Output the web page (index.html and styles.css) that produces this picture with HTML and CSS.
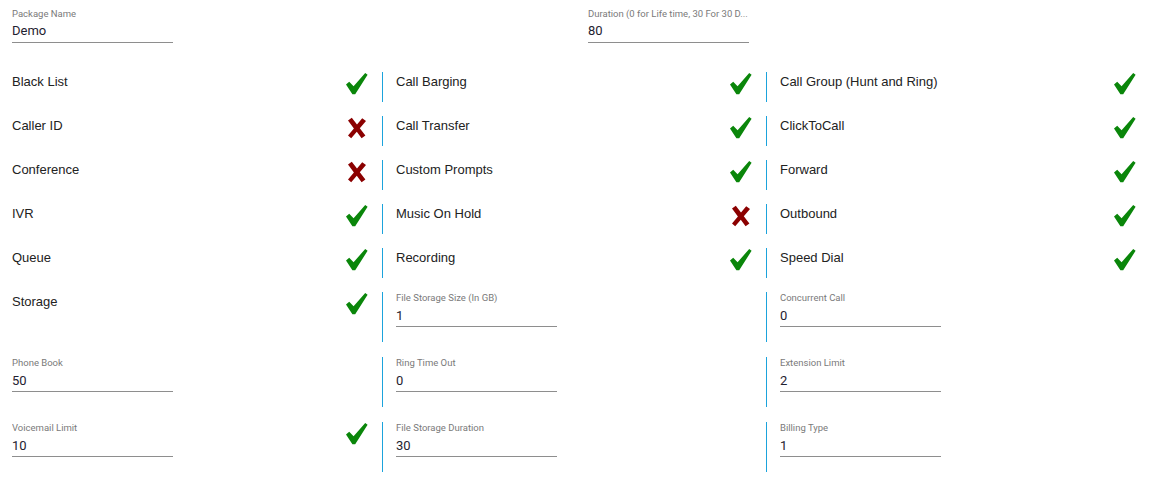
FILE: index.html
```html
<!DOCTYPE html>
<html>
<head>
<meta charset="utf-8">
<link rel="stylesheet" href="styles.css">
</head>
<body>
<div class="page">
  <div class="top-row">
    <div class="half">
      <div class="field"><div class="label">Package Name</div><div class="value">Demo</div></div>
    </div>
    <div class="half">
      <div class="field"><div class="label">Duration (0 for Life time, 30 For 30 D...</div><div class="value">80</div></div>
    </div>
  </div>

  <div class="grid">
    <!-- row 1 -->
    <div class="cell toggle"><span class="name">Black List</span><svg class="ok" viewBox="0 0 22 22"><path d="M0 11.5 L3.2 8.8 L7.6 13.2 L19.2 0 L21.6 1.8 L9.2 21.2 L6.4 21.2 Z"/></svg></div>
    <div class="cell toggle div"><span class="name">Call Barging</span><svg class="ok" viewBox="0 0 22 22"><path d="M0 11.5 L3.2 8.8 L7.6 13.2 L19.2 0 L21.6 1.8 L9.2 21.2 L6.4 21.2 Z"/></svg></div>
    <div class="cell toggle div"><span class="name">Call Group (Hunt and Ring)</span><svg class="ok" viewBox="0 0 22 22"><path d="M0 11.5 L3.2 8.8 L7.6 13.2 L19.2 0 L21.6 1.8 L9.2 21.2 L6.4 21.2 Z"/></svg></div>
    <!-- row 2 -->
    <div class="cell toggle"><span class="name">Caller ID</span><svg class="no" viewBox="0 0 20 22"><path d="M1 3.5 L4.8 0.8 L10 7.6 L15.2 1.2 L19 4 L12.8 11.2 L18.4 18.4 L14.6 21.2 L9.8 14.8 L4.2 21.2 L1 18.4 L6.9 11.4 Z"/></svg></div>
    <div class="cell toggle div"><span class="name">Call Transfer</span><svg class="ok" viewBox="0 0 22 22"><path d="M0 11.5 L3.2 8.8 L7.6 13.2 L19.2 0 L21.6 1.8 L9.2 21.2 L6.4 21.2 Z"/></svg></div>
    <div class="cell toggle div"><span class="name">ClickToCall</span><svg class="ok" viewBox="0 0 22 22"><path d="M0 11.5 L3.2 8.8 L7.6 13.2 L19.2 0 L21.6 1.8 L9.2 21.2 L6.4 21.2 Z"/></svg></div>
    <!-- row 3 -->
    <div class="cell toggle"><span class="name">Conference</span><svg class="no" viewBox="0 0 20 22"><path d="M1 3.5 L4.8 0.8 L10 7.6 L15.2 1.2 L19 4 L12.8 11.2 L18.4 18.4 L14.6 21.2 L9.8 14.8 L4.2 21.2 L1 18.4 L6.9 11.4 Z"/></svg></div>
    <div class="cell toggle div"><span class="name">Custom Prompts</span><svg class="ok" viewBox="0 0 22 22"><path d="M0 11.5 L3.2 8.8 L7.6 13.2 L19.2 0 L21.6 1.8 L9.2 21.2 L6.4 21.2 Z"/></svg></div>
    <div class="cell toggle div"><span class="name">Forward</span><svg class="ok" viewBox="0 0 22 22"><path d="M0 11.5 L3.2 8.8 L7.6 13.2 L19.2 0 L21.6 1.8 L9.2 21.2 L6.4 21.2 Z"/></svg></div>
    <!-- row 4 -->
    <div class="cell toggle"><span class="name">IVR</span><svg class="ok" viewBox="0 0 22 22"><path d="M0 11.5 L3.2 8.8 L7.6 13.2 L19.2 0 L21.6 1.8 L9.2 21.2 L6.4 21.2 Z"/></svg></div>
    <div class="cell toggle div"><span class="name">Music On Hold</span><svg class="no" viewBox="0 0 20 22"><path d="M1 3.5 L4.8 0.8 L10 7.6 L15.2 1.2 L19 4 L12.8 11.2 L18.4 18.4 L14.6 21.2 L9.8 14.8 L4.2 21.2 L1 18.4 L6.9 11.4 Z"/></svg></div>
    <div class="cell toggle div"><span class="name">Outbound</span><svg class="ok" viewBox="0 0 22 22"><path d="M0 11.5 L3.2 8.8 L7.6 13.2 L19.2 0 L21.6 1.8 L9.2 21.2 L6.4 21.2 Z"/></svg></div>
    <!-- row 5 -->
    <div class="cell toggle"><span class="name">Queue</span><svg class="ok" viewBox="0 0 22 22"><path d="M0 11.5 L3.2 8.8 L7.6 13.2 L19.2 0 L21.6 1.8 L9.2 21.2 L6.4 21.2 Z"/></svg></div>
    <div class="cell toggle div"><span class="name">Recording</span><svg class="ok" viewBox="0 0 22 22"><path d="M0 11.5 L3.2 8.8 L7.6 13.2 L19.2 0 L21.6 1.8 L9.2 21.2 L6.4 21.2 Z"/></svg></div>
    <div class="cell toggle div"><span class="name">Speed Dial</span><svg class="ok" viewBox="0 0 22 22"><path d="M0 11.5 L3.2 8.8 L7.6 13.2 L19.2 0 L21.6 1.8 L9.2 21.2 L6.4 21.2 Z"/></svg></div>
    <!-- row 6 -->
    <div class="cell toggle"><span class="name">Storage</span><svg class="ok" viewBox="0 0 22 22"><path d="M0 11.5 L3.2 8.8 L7.6 13.2 L19.2 0 L21.6 1.8 L9.2 21.2 L6.4 21.2 Z"/></svg></div>
    <div class="cell fcell div"><div class="field"><div class="label">File Storage Size (In GB)</div><div class="value">1</div></div></div>
    <div class="cell fcell div"><div class="field"><div class="label">Concurrent Call</div><div class="value">0</div></div></div>
    <!-- row 7 -->
    <div class="cell fcell"><div class="field"><div class="label">Phone Book</div><div class="value">50</div></div></div>
    <div class="cell fcell div"><div class="field"><div class="label">Ring Time Out</div><div class="value">0</div></div></div>
    <div class="cell fcell div"><div class="field"><div class="label">Extension Limit</div><div class="value">2</div></div></div>
    <!-- row 8 -->
    <div class="cell fcell"><div class="field"><div class="label">Voicemail Limit</div><div class="value">10</div></div><svg class="ok" viewBox="0 0 22 22"><path d="M0 11.5 L3.2 8.8 L7.6 13.2 L19.2 0 L21.6 1.8 L9.2 21.2 L6.4 21.2 Z"/></svg></div>
    <div class="cell fcell div"><div class="field"><div class="label">File Storage Duration</div><div class="value">30</div></div></div>
    <div class="cell fcell div"><div class="field"><div class="label">Billing Type</div><div class="value">1</div></div></div>
  </div>
</div>
</body>
</html>
```

FILE: styles.css
```css
html, body {
  margin: 0;
  padding: 0;
  background: #ffffff;
}

.page {
  width: 1150px;
  font-family: Roboto, "Liberation Sans", Arial, sans-serif;
  color: #212121;
}

.top-row {
  display: grid;
  grid-template-columns: 576px 574px;
  padding-top: 8px;
  margin-bottom: 29px;
}

.half {
  padding-left: 12px;
}

.field {
  width: 161px;
  border-bottom: 1px solid #8e8e8e;
  padding-bottom: 3px;
}

.label {
  font-size: 9.5px;
  line-height: 11px;
  color: #7a7a7a;
  white-space: nowrap;
  overflow: hidden;
}

.value {
  margin-top: 4px;
  font-size: 13px;
  line-height: 16px;
  color: #1f2230;
}

.fcell .value {
  margin-top: 5px;
}

.fcell .field {
  padding-bottom: 2px;
}

.grid {
  display: grid;
  grid-template-columns: 382px 384px 384px;
  align-items: start;
}

.cell {
  display: flex;
  justify-content: space-between;
  align-items: flex-start;
  padding: 0 14px 0 12px;
}

.cell.div {
  border-left: 1px solid #1ba3dc;
  padding-left: 13px;
}

.toggle {
  height: 30px;
  margin-bottom: 14px;
}

.fcell {
  height: 50px;
  margin-bottom: 15px;
}

.name {
  font-family: "Liberation Sans", Arial, sans-serif;
  font-size: 13px;
  line-height: 18px;
  margin-top: 1px;
  color: #222222;
}

svg.ok {
  width: 22px;
  height: 22px;
  margin-top: 1px;
  flex: none;
}

svg.ok path {
  fill: #0a860a;
}

svg.no {
  width: 20px;
  height: 22px;
  margin-top: 1px;
  margin-right: 1px;
  flex: none;
}

svg.no path {
  fill: #8b0000;
}
```
